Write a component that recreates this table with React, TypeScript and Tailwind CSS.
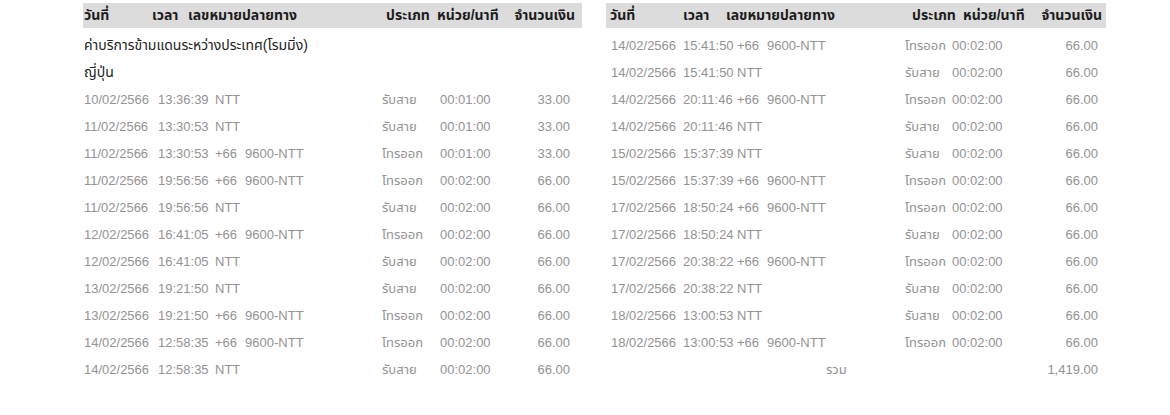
const FONT = { fontFamily: '"Liberation Sans", "Noto Sans Thai", "Noto Sans", sans-serif' }

type Row = [string, string, string, string, string, string]

const leftRows: Row[] = [
    ['10/02/2566', '13:36:39', 'NTT', 'รับสาย', '00:01:00', '33.00'],
    ['11/02/2566', '13:30:53', 'NTT', 'รับสาย', '00:01:00', '33.00'],
    ['11/02/2566', '13:30:53', '+66 9600-NTT', 'โทรออก', '00:01:00', '33.00'],
    ['11/02/2566', '19:56:56', '+66 9600-NTT', 'โทรออก', '00:02:00', '66.00'],
    ['11/02/2566', '19:56:56', 'NTT', 'รับสาย', '00:02:00', '66.00'],
    ['12/02/2566', '16:41:05', '+66 9600-NTT', 'โทรออก', '00:02:00', '66.00'],
    ['12/02/2566', '16:41:05', 'NTT', 'รับสาย', '00:02:00', '66.00'],
    ['13/02/2566', '19:21:50', 'NTT', 'รับสาย', '00:02:00', '66.00'],
    ['13/02/2566', '19:21:50', '+66 9600-NTT', 'โทรออก', '00:02:00', '66.00'],
    ['14/02/2566', '12:58:35', '+66 9600-NTT', 'โทรออก', '00:02:00', '66.00'],
    ['14/02/2566', '12:58:35', 'NTT', 'รับสาย', '00:02:00', '66.00'],
]

const rightRows: Row[] = [
    ['14/02/2566', '15:41:50', '+66 9600-NTT', 'โทรออก', '00:02:00', '66.00'],
    ['14/02/2566', '15:41:50', 'NTT', 'รับสาย', '00:02:00', '66.00'],
    ['14/02/2566', '20:11:46', '+66 9600-NTT', 'โทรออก', '00:02:00', '66.00'],
    ['14/02/2566', '20:11:46', 'NTT', 'รับสาย', '00:02:00', '66.00'],
    ['15/02/2566', '15:37:39', 'NTT', 'รับสาย', '00:02:00', '66.00'],
    ['15/02/2566', '15:37:39', '+66 9600-NTT', 'โทรออก', '00:02:00', '66.00'],
    ['17/02/2566', '18:50:24', '+66 9600-NTT', 'โทรออก', '00:02:00', '66.00'],
    ['17/02/2566', '18:50:24', 'NTT', 'รับสาย', '00:02:00', '66.00'],
    ['17/02/2566', '20:38:22', '+66 9600-NTT', 'โทรออก', '00:02:00', '66.00'],
    ['17/02/2566', '20:38:22', 'NTT', 'รับสาย', '00:02:00', '66.00'],
    ['18/02/2566', '13:00:53', 'NTT', 'รับสาย', '00:02:00', '66.00'],
    ['18/02/2566', '13:00:53', '+66 9600-NTT', 'โทรออก', '00:02:00', '66.00'],
]

function Number({ value }: { value: string }) {
    const parts = value.split(' ')
    if (parts.length === 1) return <>{value}</>
    return (
        <>
            <span>{parts[0]}</span>
            <span className="ml-[8px]">{parts[1]}</span>
        </>
    )
}

export default function App() {
    return (
        <div className="h-[415px] w-[1170px] bg-white text-[13px]" style={FONT}>
            <div className="flex gap-[24px] pl-[83px] pt-[3px]">
                {/* left half */}
                <div className="w-[499px]">
                    <div className="flex h-[25px] items-center bg-[#dcdcdc] pl-[1px] pr-[7px] text-[14px] font-bold text-[#1c1c1c]">
                        <span className="w-[68px]">วันที่</span>
                        <span className="w-[36px]">เวลา</span>
                        <span className="w-[198px]">เลขหมายปลายทาง</span>
                        <span className="w-[51px]">ประเภท</span>
                        <span className="flex-1">หน่วย/นาที</span>
                        <span>จำนวนเงิน</span>
                    </div>
                    <div className="mt-[4px] flex h-[27px] items-center pl-[1px] text-[14px] text-[#222]">
                        ค่าบริการข้ามแดนระหว่างประเทศ(โรมมิ่ง)
                    </div>
                    <div className="flex h-[27px] items-center pl-[1px] text-[14px] text-[#222]">ญี่ปุ่น</div>
                    {leftRows.map((r, i) => (
                        <div key={i} className="flex h-[27px] items-center pl-[1px] pr-[12px] text-[#939393]">
                            <span className="w-[74px]">{r[0]}</span>
                            <span className="w-[57px]">{r[1]}</span>
                            <span className="w-[167px]">
                                <Number value={r[2]} />
                            </span>
                            <span className="w-[58px]">{r[3]}</span>
                            <span className="flex-1">{r[4]}</span>
                            <span className="text-right">{r[5]}</span>
                        </div>
                    ))}
                </div>

                {/* right half */}
                <div className="w-[500px]">
                    <div className="flex h-[25px] items-center bg-[#dcdcdc] pl-[4px] pr-[4px] text-[14px] font-bold text-[#1c1c1c]">
                        <span className="w-[73px]">วันที่</span>
                        <span className="w-[43px]">เวลา</span>
                        <span className="w-[186px]">เลขหมายปลายทาง</span>
                        <span className="w-[51px]">ประเภท</span>
                        <span className="flex-1">หน่วย/นาที</span>
                        <span>จำนวนเงิน</span>
                    </div>
                    <div className="mt-[4px]">
                        {rightRows.map((r, i) => (
                            <div key={i} className="flex h-[27px] items-center pl-[5px] pr-[8px] text-[#939393]">
                                <span className="w-[72px]">{r[0]}</span>
                                <span className="w-[54px]">{r[1]}</span>
                                <span className="w-[168px]">
                                    <Number value={r[2]} />
                                </span>
                                <span className="w-[47px]">{r[3]}</span>
                                <span className="flex-1">{r[4]}</span>
                                <span className="text-right">{r[5]}</span>
                            </div>
                        ))}
                        <div className="flex h-[27px] items-center pr-[8px] text-[#939393]">
                            <span className="ml-[220px] flex-1">รวม</span>
                            <span>1,419.00</span>
                        </div>
                    </div>
                </div>
            </div>
        </div>
    )
}
